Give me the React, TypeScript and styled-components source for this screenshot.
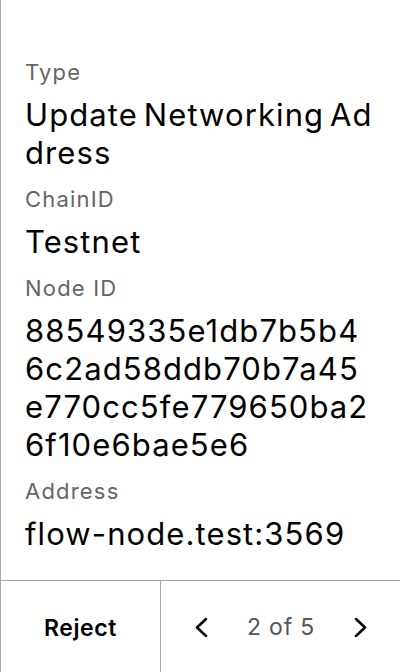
import React from "react";
import styled, { createGlobalStyle } from "styled-components";

const Global = createGlobalStyle`
  html, body { margin: 0; padding: 0; background: #fff; }
  body { font-family: Inter, "Noto Sans", sans-serif; }
  * { box-sizing: border-box; }
`;

const Screen = styled.div`
  width: 400px;
  height: 672px;
  display: flex;
  flex-direction: column;
  border-left: 1px solid #a8a8a8;
  background: #fff;
`;

const Content = styled.div`
  flex: 1;
  display: flex;
  flex-direction: column;
  padding: 58px 25px 0 24px;
`;

const Label = styled.div`
  font-size: 22px;
  line-height: 28px;
  letter-spacing: 1.2px;
  color: #666;
  margin-bottom: 10px;
`;

const Value = styled.div`
  font-size: 31px;
  line-height: 38px;
  letter-spacing: 1.1px;
  word-spacing: -4px;
  color: #000;
  word-break: break-all;
  margin-bottom: 13px;
`;

const Footer = styled.div`
  height: 92px;
  display: flex;
  border-top: 1px solid #a8a8a8;
`;

const RejectButton = styled.div`
  width: 160px;
  display: flex;
  align-items: center;
  justify-content: center;
  padding-top: 2px;
  font-size: 23px;
  font-weight: 600;
  letter-spacing: 0.6px;
  color: #000;
  border-right: 1px solid #a8a8a8;
`;

const Pager = styled.div`
  flex: 1;
  display: flex;
  align-items: center;
  justify-content: space-between;
  padding: 0 31px 0 32px;
`;

const PageText = styled.span`
  font-size: 23px;
  letter-spacing: 0.8px;
  color: #555;
`;

const Chevron = ({ dir }: { dir: "left" | "right" }) => (
  <svg width="16" height="20" viewBox="0 0 16 20" fill="none" stroke="#000" strokeWidth="2.5" strokeLinecap="round" strokeLinejoin="round">
    {dir === "left" ? <path d="M13 2L4 10.5 13 19" /> : <path d="M3 2l9 8.5L3 19" />}
  </svg>
);

const fields = [
  { label: "Type", value: "Update Networking Address" },
  { label: "ChainID", value: "Testnet" },
  { label: "Node ID", value: "88549335e1db7b5b46c2ad58ddb70b7a45e770cc5fe779650ba26f10e6bae5e6" },
  { label: "Address", value: "flow-node.test:3569" },
];

export default function App() {
  return (
    <>
      <Global />
      <Screen>
        <Content>
          {fields.map((f) => (
            <React.Fragment key={f.label}>
              <Label>{f.label}</Label>
              <Value>{f.value}</Value>
            </React.Fragment>
          ))}
        </Content>
        <Footer>
          <RejectButton>Reject</RejectButton>
          <Pager>
            <Chevron dir="left" />
            <PageText>2 of 5</PageText>
            <Chevron dir="right" />
          </Pager>
        </Footer>
      </Screen>
    </>
  );
}
